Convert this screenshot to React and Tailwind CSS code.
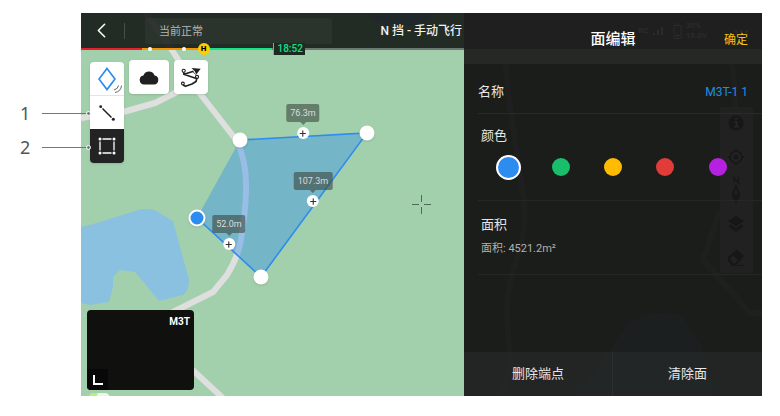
import { useState } from 'react';
import { ChevronLeft, Plus } from 'lucide-react';
import clsx from 'clsx';

const CALLOUTS = [1, 2];

const COLORS = [
  { id: 'blue', label: '蓝色', className: 'bg-[#2d8cf0]' },
  { id: 'green', label: '绿色', className: 'bg-[#19be6b]' },
  { id: 'yellow', label: '黄色', className: 'bg-[#ffbb00]' },
  { id: 'red', label: '红色', className: 'bg-[#e23c39]' },
  { id: 'purple', label: '紫色', className: 'bg-[#b620e0]' },
];

// Polygon vertices and edge midpoints, in map canvas pixels
const VERTICES = [
  { x: 159, y: 127 },
  { x: 286, y: 120 },
  { x: 180, y: 264 },
  { x: 116, y: 205, selected: true },
];

const EDGES = [
  { x: 222, y: 120, length: '76.3m' },
  { x: 232, y: 188, length: '107.3m' },
  { x: 148, y: 231, length: '52.0m' },
];

function MapCanvas() {
  const points = VERTICES.map((v) => `${v.x},${v.y}`).join(' ');
  return (
    <svg className="absolute inset-0 h-full w-full" aria-hidden="true">
      <path
        d="M0 214 L9 212 L54 198 L60 196 L72 196 L92 208 L108 267 Q108 278 102 282 L78 288 L54 259 L39 257 L32 264 L32 274 L28 289 L9 292 L0 290 Z"
        fill="#8bc1e0"
      />
      <ellipse cx="320" cy="2" rx="32" ry="11" fill="#8bb0f0" />
      <g fill="none" stroke="#dfdfdf" strokeWidth="6" strokeLinejoin="round">
        <path d="M62 -4 L91 37 L117 78 L156 128 Q166 150 165 178 Q164 205 160 226 Q158 242 146 262 L132 279 L94 298 L70 310" />
        <path d="M0 105 L42 99 L74 90 L98 78 L116 72" />
        <path d="M104 350 L144 387" />
      </g>
      <polygon points={points} fill="#2d8cf0" fillOpacity="0.4" />
      <polyline points={points} fill="none" stroke="#2d8cf0" strokeWidth="1.6" />
      <g stroke="#4f6a54" strokeWidth="1">
        <path d="M331 191.500 h7 M343 191.500 h7 M340.500 182 v7 M340.500 194 v7" />
      </g>
      <rect x="8" y="380" width="21" height="10" rx="5" fill="#eef4ea" />
      <path d="M8 385 a5 5 0 0 1 5 -5 h4 l-3 6 z" fill="#b4f07c" />
    </svg>
  );
}

function Vertex({ x, y, selected }) {
  return (
    <button
      aria-label="端点"
      style={{ left: x, top: y }}
      className={clsx(
        'absolute -translate-x-1/2 -translate-y-1/2 rounded-full shadow',
        selected ? 'size-[17px] border-2 border-white bg-[#2d8cf0]' : 'size-[15px] bg-white'
      )}
    />
  );
}

function EdgeMarker({ x, y, length }) {
  return (
    <div style={{ left: x, top: y }} className="absolute flex -translate-x-1/2 -translate-y-full flex-col items-center">
      <span className="rounded-xs bg-[#3c4640]/60 px-1 text-[9px] leading-[18px] text-[#d9dedb]">{length}</span>
      <span className="size-0 border-x-3 border-t-3 border-x-transparent border-t-[#3c4640]/60" />
      <button aria-label="添加端点" className="mt-0.5 -mb-1.5 flex size-3 items-center justify-center rounded-full bg-white text-[#333]">
        <Plus size={9} strokeWidth={3} />
      </button>
    </div>
  );
}

function TopBar() {
  return (
    <header className="relative flex h-[35px] items-center bg-[#151915]/90">
      <button aria-label="返回" className="ml-2 text-white">
        <ChevronLeft size={25} strokeWidth={1.5} />
      </button>
      <span className="ml-2.5 h-4 w-px bg-[#4a4e4a]" />
      <span className="ml-5 flex h-[26px] w-[187px] items-center rounded-xs bg-white/4 px-3.5 pt-1 text-[11px] text-[#b4b6b4]">当前正常</span>
      <span className="ml-auto pr-0.5 text-[12px] font-medium whitespace-nowrap text-[#f2f2f2]">N 挡 - 手动飞行</span>
    </header>
  );
}

function FlightTimeBar() {
  return (
    <div className="relative flex h-0.5">
      <span className="w-[16%] bg-[#e8202c]" />
      <span className="w-[15%] bg-[#f59300]" />
      <span className="w-[19%] bg-[#12e383]" />
      <span className="flex-1 bg-[#6f7770]" />
      <span className="absolute top-1/2 left-[18%] size-1 -translate-x-1/2 -translate-y-1/2 rounded-full bg-white" />
      <span className="absolute top-1/2 left-[27%] size-1 -translate-x-1/2 -translate-y-1/2 rounded-full bg-white" />
      <span className="absolute top-1/2 left-[32%] flex size-3 -translate-x-1/2 -translate-y-1/2 items-center justify-center rounded-full bg-[#ffcc00] text-[8px] font-black text-black">
        H
      </span>
      <span className="absolute top-1/2 left-[50%] -translate-y-1/2 border-l border-[#12e383] bg-[#1d2a22] pr-0.5 pl-1 text-[10px] leading-3 font-medium text-[#12e383]">
        18:52
      </span>
    </div>
  );
}

function CloudIcon() {
  return (
    <svg width="20" height="15" viewBox="0 0 20 15" fill="#202020">
      <path d="M5 14.500 A4.600 4.600 0 0 1 4.400 5.400 A6 6 0 0 1 15.600 5.400 A4.600 4.600 0 0 1 15 14.500 Z" />
    </svg>
  );
}

function RouteIcon() {
  return (
    <svg width="20" height="22" viewBox="0 0 20 22" fill="none" stroke="#202020" strokeWidth="1.1">
      <circle cx="2.700" cy="4.800" r="1.600" />
      <circle cx="16" cy="11" r="1.600" />
      <circle cx="1.900" cy="17.500" r="1.400" />
      <path d="M3 8.300 L12.500 5.300 M2.800 6.500 V8.300 L13.800 12 L15.800 12.300 L15 15.500 L11 18 L4.500 20.300 L2 19" strokeWidth="1.7" strokeLinejoin="round" />
      <path d="M10.500 2 L19.700 2.700 L15.300 8.600 L13.800 5.200 Z" fill="#202020" stroke="none" />
      <path d="M11.800 5.500 L14.900 8.800" strokeWidth="0.8" />
    </svg>
  );
}

function DrawTools() {
  return (
    <div className="flex items-start gap-[5px] px-[9px] pt-2.5">
      <div className="mt-0.5 w-[34px] overflow-hidden rounded-sm shadow">
        <button aria-label="标注" className="relative flex h-[34px] w-full items-center justify-center border-b border-[#e4e4e4] bg-white">
          <svg width="18" height="26" viewBox="0 0 18 26" fill="none" stroke="#2d8cf0" strokeWidth="1.7">
            <path d="M9 2.500 L17 13 L9 23.500 L1 13 Z" />
          </svg>
          <svg className="absolute right-0.5 bottom-0.5" width="8" height="8" viewBox="0 0 8 8" fill="none" stroke="#666" strokeWidth="1">
            <path d="M4.500 0.500 Q4 4 0 5 M7.500 0.500 Q7 6.500 1 7.500" />
          </svg>
        </button>
        <button aria-label="线" className="flex h-[33px] w-full items-center justify-center bg-white">
          <svg width="16" height="16" viewBox="0 0 16 16" stroke="#202020" strokeWidth="1.5" fill="#202020">
            <path d="M3.500 3.500 L12.500 12.500" />
            <circle cx="1.700" cy="1.700" r="1.400" stroke="none" />
            <circle cx="14.300" cy="14.300" r="1.500" stroke="none" />
          </svg>
        </button>
        <button aria-label="面" className="flex h-[34px] w-full items-center justify-center bg-[#232323]">
          <svg width="18" height="18" viewBox="0 0 18 18" stroke="white" strokeWidth="1.3" fill="white">
            <path d="M4.500 2 H13.500 M4.500 16 H13.500 M2 4.500 V13.500 M16 4.500 V13.500" />
            <g stroke="none">
              <circle cx="2" cy="2" r="1.500" />
              <circle cx="16" cy="2" r="1.500" />
              <circle cx="2" cy="16" r="1.500" />
              <circle cx="16" cy="16" r="1.500" />
            </g>
          </svg>
        </button>
      </div>
      <button aria-label="云端" className="flex h-[34px] w-10 items-center justify-center rounded-sm bg-white shadow">
        <CloudIcon />
      </button>
      <button aria-label="航线" className="flex h-[34px] w-[34px] items-center justify-center rounded-sm bg-white shadow">
        <RouteIcon />
      </button>
    </div>
  );
}

function CameraPreview() {
  return (
    <div className="mt-auto mb-1.5 ml-1.5 flex h-20 w-[107px] flex-col justify-between overflow-hidden rounded-sm bg-[#10110f]">
      <span className="self-end px-1 pt-1 text-[10px] leading-4 font-bold text-white">M3T</span>
      <span className="flex size-[21px] items-center justify-center bg-[#080808]">
        <span className="size-2.5 border-b-2 border-l-2 border-white" />
      </span>
    </div>
  );
}

// Map layers that shine faintly through the panel
function PanelBackdrop() {
  return (
    <div className="pointer-events-none absolute inset-0">
      <svg className="h-full w-full" aria-hidden="true">
        <path d="M112 383 L129 362 L146 337 L163 311 Q190 293 218 303 Q236 325 243 350 L250 383 Z" fill="#1b1f20" />
        <g fill="none" stroke="#201f20" strokeWidth="6" strokeLinejoin="round">
          <path d="M41 37 L44 80 L51 127 L58 174 Q65 205 54 244 Q43 270 43 300 L46 350 L39 383" />
          <path d="M264 37 Q272 60 271 94 M256 197 L239 247 L286 300 H298" />
        </g>
        <rect x="256" y="94" width="33" height="166" rx="2" fill="#212121" />
        <g fill="#171717">
          <circle cx="272" cy="110" r="7.500" />
          <path d="M270 108 h3.500 v5 h1.500 v1.500 h-5 v-1.500 h1.500 v-3.500 h-1.500 z M271 104.500 h2.500 v2 h-2.500 z" fill="#262626" />
          <circle cx="272" cy="144" r="6" fill="none" stroke="#171717" strokeWidth="1.500" />
          <circle cx="272" cy="144" r="2.300" />
          <path d="M271 136 h2 v3 h-2 z M271 149 h2 v3 h-2 z M264 143 h3 v2 h-3 z M277 143 h3 v2 h-3 z" />
          <path d="M270 170 V164.500 L274.500 170 V164.500" fill="none" stroke="#171717" strokeWidth="1.300" />
          <path d="M272 171 L276.500 181.500 L272 191 L267.500 181.500 Z M272 175 L270 181 H274 Z" fillRule="evenodd" />
          <path d="M272 203 L280 208 L272 213.500 L264 208 Z" />
          <path d="M264 213 L267 211.500 L272 215.500 L277 211.500 L280 213 L272 219 Z" />
          <path d="M264 244 L273 236.500 L280 243 L272 252 H280 V253 H268 L264 248 Z M266 245 L269 242.500 L274 247 L271 250.500 H269 Z" fillRule="evenodd" />
        </g>
      </svg>
    </div>
  );
}

function StatusGhost() {
  return (
    <div className="pointer-events-none absolute top-0 right-3.5 flex h-9 items-center gap-1 text-[8px] leading-2.5 font-bold text-[#2b2b2b]" aria-hidden="true">
      <span>RC</span>
      <svg className="mr-1" width="12" height="8" viewBox="0 0 12 8" fill="#2b2b2b">
        <path d="M0 6 h2 v2 h-2 z M4 3 h2 v5 h-2 z M8 0 h2 v8 h-2 z" />
      </svg>
      <svg width="9" height="16" viewBox="0 0 9 16" fill="none" stroke="#2b2b2b">
        <path d="M1 2.500 h7 v13 h-7 z M3 1 h3" />
        <path d="M2.500 12.500 h4" strokeWidth="2" />
      </svg>
      <span className="flex flex-col">
        <span>30%</span>
        <span>15.0V</span>
      </span>
      <svg className="ml-6" width="13" height="3" viewBox="0 0 13 3" fill="#2b2b2b">
        <circle cx="1.500" cy="1.500" r="1.500" />
        <circle cx="6.500" cy="1.500" r="1.500" />
        <circle cx="11.500" cy="1.500" r="1.500" />
      </svg>
    </div>
  );
}

function AreaPanel() {
  const [color, setColor] = useState('blue');

  return (
    <aside className="relative flex w-[298px] shrink-0 flex-col bg-[#1b1d1a] text-[13px] text-[#e6e6e6]">
      <PanelBackdrop />

      <header className="relative grid h-[51px] grid-cols-[1fr_auto_1fr] items-center border-b-[15px] border-[#262826] bg-[#1f1f1f]">
        <StatusGhost />
        <h1 className="relative col-start-2 -mb-4 text-[15px] font-medium text-white">面编辑</h1>
        <button className="relative -mb-4 justify-self-end pt-0.5 pr-3.5 text-[12px] text-[#f5c518]">确定</button>
      </header>

      <div className="relative ml-3.5 flex h-[50px] items-center justify-between border-b border-[#292b28] pt-1.5 pr-3.5">
        <span>名称</span>
        <button className="text-[12px] text-[#1f8fe0]">M3T-1 1</button>
      </div>

      <fieldset className="relative h-[86px] pt-3">
        <legend className="float-left w-full pl-[17px] leading-5">颜色</legend>
        <div className="clear-both grid h-[42px] grid-cols-5 items-center justify-items-center px-[18px]">
          {COLORS.map((c) => (
            <input
              key={c.id}
              type="radio"
              name="color"
              aria-label={c.label}
              checked={color === c.id}
              onChange={() => setColor(c.id)}
              className={clsx(
                'appearance-none rounded-full',
                c.className,
                color === c.id ? 'size-[25px] border-2 border-white' : 'size-[18px]'
              )}
            />
          ))}
        </div>
      </fieldset>

      <section className="relative ml-3.5 h-[75px] border-y border-[#252724] pt-3.5 pl-[3px]">
        <h2 className="leading-5">面积</h2>
        <p className="mt-1 text-[11px] leading-5 text-[#b0b0b0]">面积: 4521.2m²</p>
      </section>

      <footer className="relative mt-auto grid h-11 grid-cols-2 divide-x divide-[#2e3030] bg-[#252727]/90">
        <button>删除端点</button>
        <button>清除面</button>
      </footer>
    </aside>
  );
}

export default function App() {
  return (
    <div className="flex min-h-screen bg-white pt-[13px] pr-[18px] pb-5 font-[Roboto,'Noto_Sans_CJK_SC',sans-serif]">
      <ol className="z-10 w-[81px] shrink-0 pt-[83px]">
        {CALLOUTS.map((n) => (
          <li key={n} className="-mr-2.5 flex h-[34px] items-center font-['Noto_Sans',sans-serif] text-[18px] text-[#555]">
            <span className="w-[42px] pl-5">{n}</span>
            <span className="h-px flex-1 bg-[#777]" />
            <span className="size-[5px] rounded-full border border-white bg-[#777]" />
          </li>
        ))}
      </ol>

      <main className="flex min-w-0 flex-1">
        <section className="relative flex min-w-0 flex-1 flex-col overflow-hidden bg-[#a3d0ac]">
          <MapCanvas />
          {VERTICES.map((v) => (
            <Vertex key={`${v.x}-${v.y}`} {...v} />
          ))}
          {EDGES.map((e) => (
            <EdgeMarker key={e.length} {...e} />
          ))}
          <div className="relative flex flex-1 flex-col pointer-events-none *:pointer-events-auto">
            <TopBar />
            <FlightTimeBar />
            <DrawTools />
            <CameraPreview />
          </div>
        </section>
        <AreaPanel />
      </main>
    </div>
  );
}
